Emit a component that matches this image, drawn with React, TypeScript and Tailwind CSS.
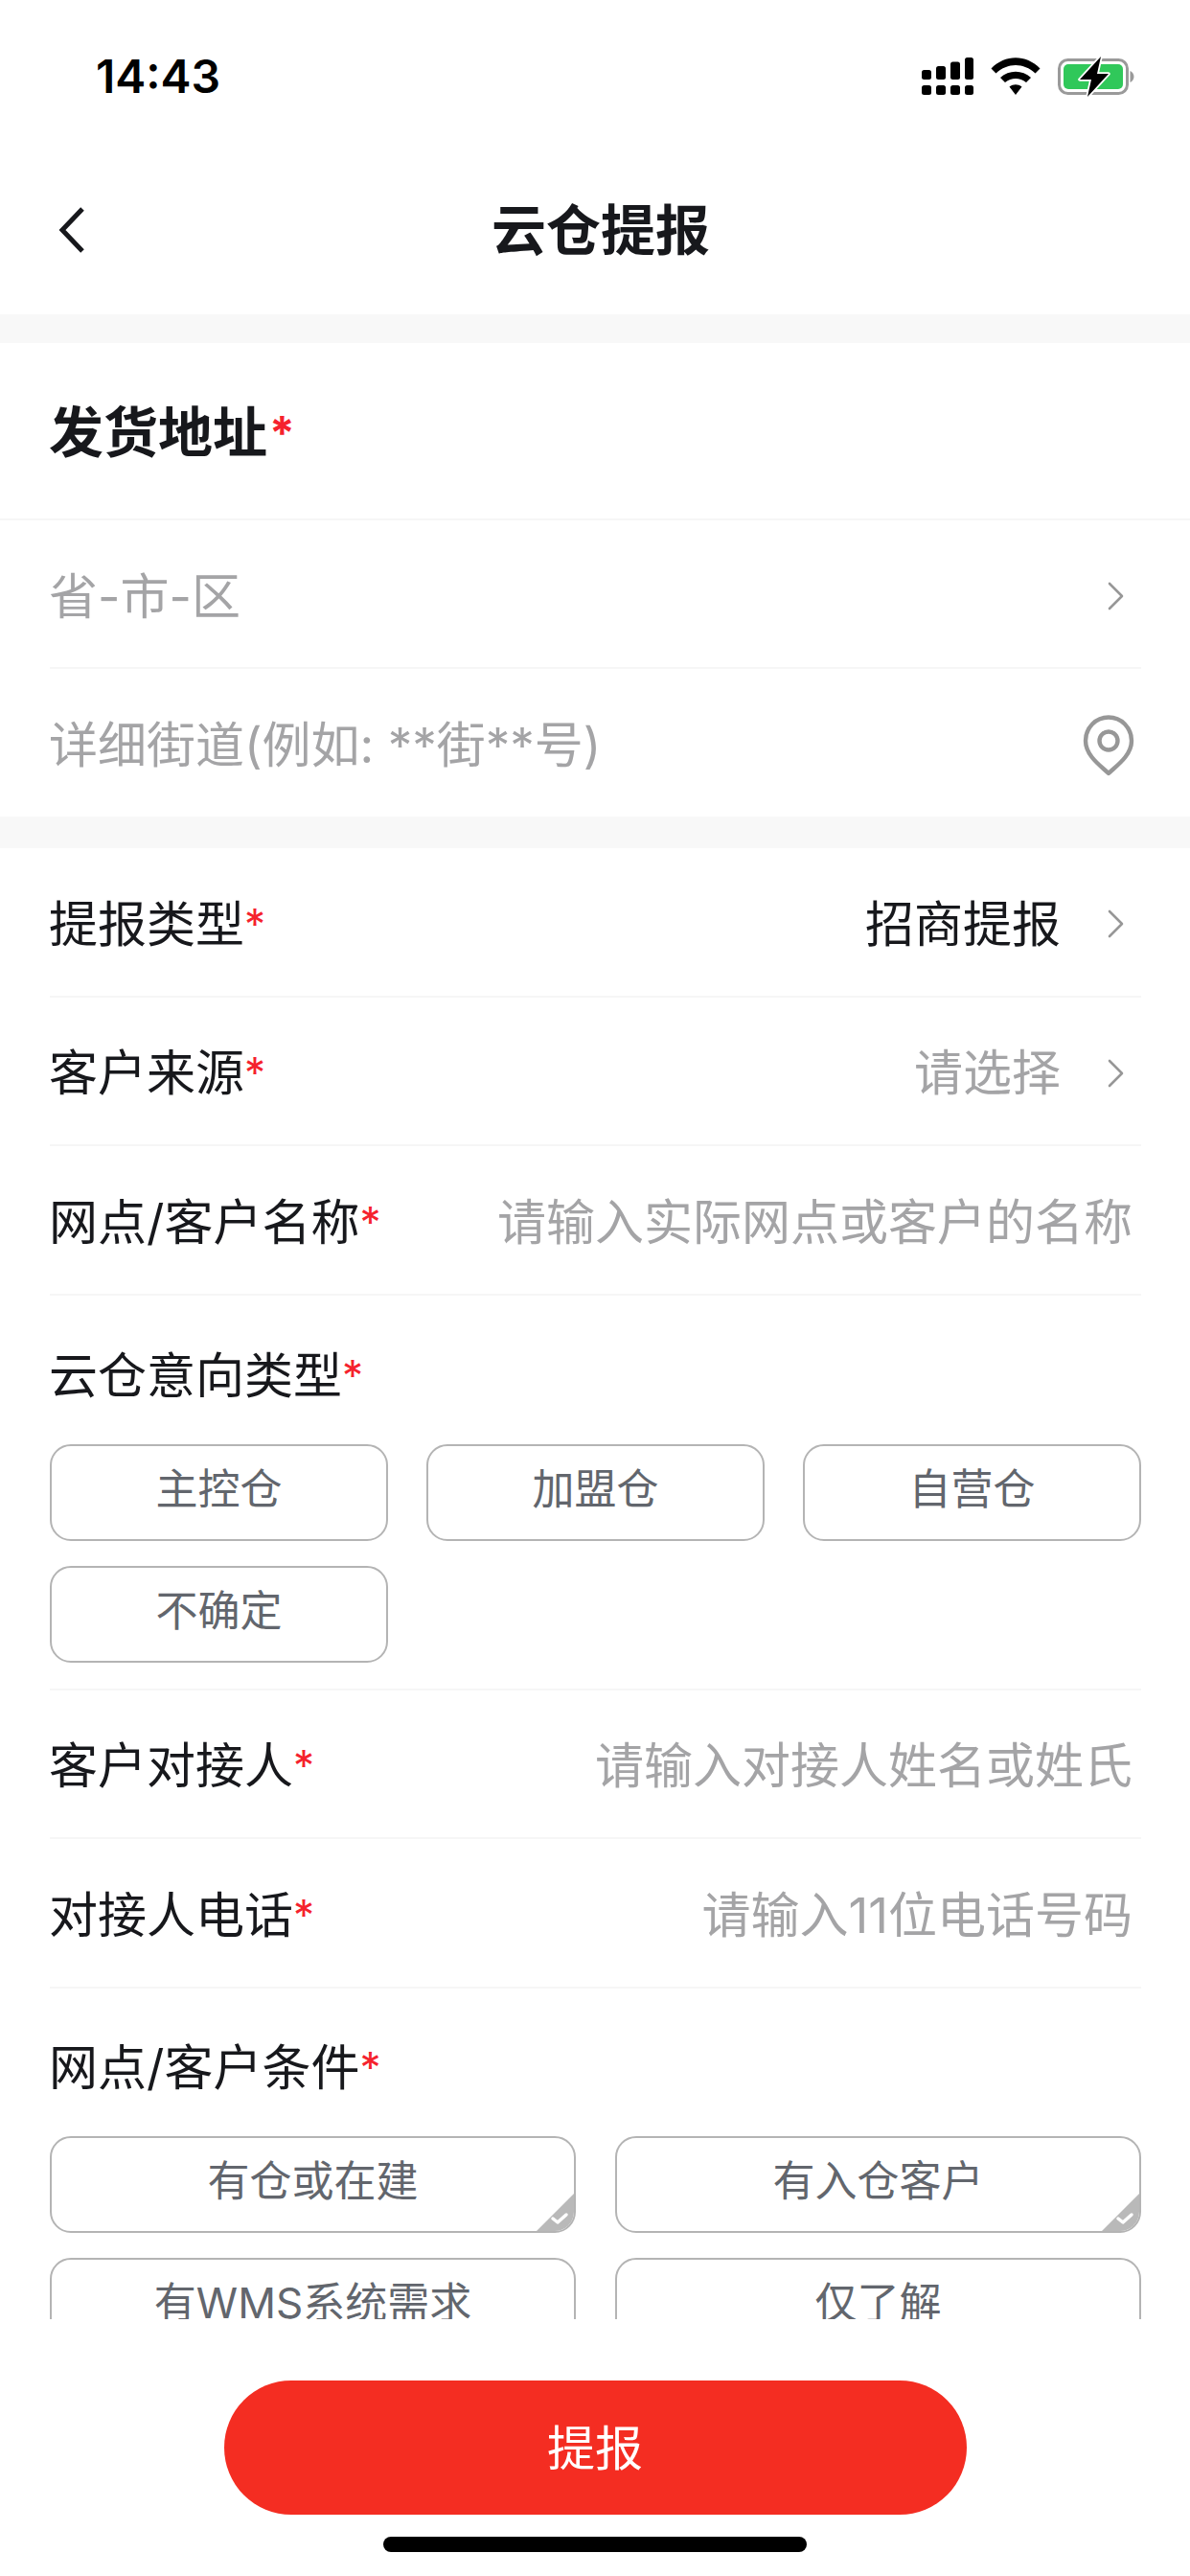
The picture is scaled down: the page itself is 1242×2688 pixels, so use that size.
const FONT = "font-['Inter','Noto_Sans_CJK_SC',sans-serif]";

function Chevron() {
  return (
    <svg width="18" height="30" viewBox="0 0 18 30" fill="none" className="shrink-0">
      <path d="M2 2 L15 15 L2 28" stroke="#979797" strokeWidth="2.6" strokeLinecap="round" strokeLinejoin="round" />
    </svg>
  );
}

function PinIcon() {
  return (
    <svg width="54" height="64" viewBox="0 0 54 64" fill="none" className="shrink-0">
      <path
        d="M27 61 C20 54 3 43 3 27 C3 13 14 2.500 27 2.500 C40 2.500 51 13 51 27 C51 43 34 54 27 61 Z"
        stroke="#979797"
        strokeWidth="4.400"
        strokeLinejoin="round"
      />
      <circle cx="27" cy="27" r="9.500" stroke="#979797" strokeWidth="4.400" />
    </svg>
  );
}

function SignalIcon() {
  return (
    <svg width="54" height="40" viewBox="0 0 54 40" fill="black">
      <rect x="0" y="13" width="10" height="10" rx="2.500" />
      <rect x="15" y="9" width="10" height="14" rx="2.500" />
      <rect x="30" y="4.500" width="10" height="18.500" rx="2.500" />
      <rect x="45" y="0" width="9" height="23" rx="2.500" />
      <rect x="0" y="29" width="10" height="10" rx="2.500" />
      <rect x="15" y="29" width="10" height="10" rx="2.500" />
      <rect x="30" y="29" width="10" height="10" rx="2.500" />
      <rect x="45" y="29" width="9" height="10" rx="2.500" />
    </svg>
  );
}

function WifiIcon() {
  return (
    <svg width="52" height="40" viewBox="0 0 52 40" fill="black">
      <path d="M0.500 11.500 C15 -3.500 37 -3.500 51.500 11.500 L46.500 16.500 C34.500 5 17.500 5 5.500 16.500 Z" />
      <path d="M10 21 C19 12.500 33 12.500 42 21 L37 26 C30.500 20.500 21.500 20.500 15 26 Z" />
      <path d="M19.500 30.500 C23.500 27.500 28.500 27.500 32.500 30.500 L26 39 Z" />
    </svg>
  );
}

function BatteryIcon() {
  return (
    <svg width="80" height="44" viewBox="0 0 80 44" fill="none">
      <rect x="1.500" y="4.500" width="71" height="35" rx="9" stroke="#9a9a9a" strokeWidth="3" />
      <rect x="6" y="9" width="62" height="26" rx="5" fill="#30c85a" />
      <path d="M75.500 16 C78 17 79.500 19.500 79.500 22 C79.500 24.500 78 27 75.500 28 Z" fill="#9a9a9a" />
      <path
        d="M45 1 L23 25 L35 25 L31 43 L53 19 L41 19 Z"
        fill="black"
        stroke="white"
        strokeWidth="3.500"
        strokeLinejoin="round"
        paintOrder="stroke"
      />
    </svg>
  );
}

function Label({ text }: { text: string }) {
  return (
    <span className="-ml-[1px] shrink-0 whitespace-nowrap text-[51px] leading-none text-[#17181c]">
      {text}
      <span className="relative -top-[3px] text-[44px] text-[#f5222d]">*</span>
    </span>
  );
}

function FormRow({
  label,
  value,
  placeholder,
  arrow,
}: {
  label: string;
  value?: string;
  placeholder?: string;
  arrow?: boolean;
}) {
  return (
    <div className="flex h-[155.5px] items-center justify-between border-b-2 border-[#f6f6f6] pt-[5px]">
      <Label text={label} />
      <div className="flex items-center">
        {value && <span className="text-[51px] leading-none text-[#17181c]">{value}</span>}
        {placeholder && (
          <span className={`text-[51px] leading-none text-[#a4a4a6] ${arrow ? "" : "mr-[9px]"}`}>{placeholder}</span>
        )}
        {arrow && (
          <span className="ml-[49px] mr-[17px] flex">
            <Chevron />
          </span>
        )}
      </div>
    </div>
  );
}

function Chip({ text, checked }: { text: string; checked?: boolean }) {
  return (
    <div className="relative flex h-[101px] items-center justify-center overflow-hidden rounded-[22px] border-2 border-[#b4b4b4] bg-white pb-[6px] text-[44px] leading-none text-[#62666d]">
      {text}
      {checked && (
        <svg width="39" height="39" viewBox="0 0 39 39" className="absolute right-0 bottom-0">
          <path d="M39 0 L39 39 L0 39 Z" fill="#b9b9b9" />
          <path d="M17 26 L22 30 L31 22" fill="none" stroke="white" strokeWidth="3.500" strokeLinecap="round" strokeLinejoin="round" />
        </svg>
      )}
    </div>
  );
}

const intentChips = ["主控仓", "加盟仓", "自营仓", "不确定"];

const conditionChips = [
  { text: "有仓或在建", checked: true },
  { text: "有入仓客户", checked: true },
  { text: "有WMS系统需求" },
  { text: "仅了解" },
];

export default function App() {
  return (
    <div className={`flex h-[2688px] w-[1242px] flex-col overflow-hidden bg-white ${FONT}`}>
      {/* Status bar */}
      <div className="flex h-[156px] items-center justify-between pt-[3px] pl-[100px] pr-[58px]">
        <span className="text-[48px] leading-none font-semibold text-black">14:43</span>
        <div className="flex items-center gap-[18px]">
          <SignalIcon />
          <WifiIcon />
          <BatteryIcon />
        </div>
      </div>

      {/* Nav bar */}
      <div className="relative flex h-[172px] items-center justify-center pb-[4px] pl-[12px]">
        <svg width="30" height="50" viewBox="0 0 30 50" fill="none" className="absolute top-[59px] left-[60px]">
          <path d="M26 3 L5 25 L26 47" stroke="#17181c" strokeWidth="5" />
        </svg>
        <span className="text-[57px] leading-none font-bold text-[#17181c]">云仓提报</span>
      </div>

      {/* Form */}
      <div className="flex-1 overflow-hidden">
        <div className="h-[30px] bg-[#f8f8f8]" />

        <div className="flex h-[185px] items-center border-b-2 border-[#f6f6f6] pr-[52px] pl-[51px] pt-[4px]">
          <span className="text-[57px] leading-none font-bold text-[#17181c]">
            发货地址
            <span className="relative -top-[3px] ml-[2px] text-[48px] text-[#f5222d]">*</span>
          </span>
        </div>

        <div className="pl-[52px] pr-[51px]">
          <div className="flex h-[155px] items-center justify-between border-b-2 border-[#f6f6f6] pt-[5px]">
            <span className="-ml-[1px] text-[51px] leading-none text-[#a4a4a6]">省-市-区</span>
            <span className="mr-[17px] flex">
              <Chevron />
            </span>
          </div>
          <div className="flex h-[154px] items-center justify-between pt-[5px]">
            <span className="-ml-[1px] text-[51px] leading-none text-[#a4a4a6]">详细街道(例如: **街**号)</span>
            <span className="mr-[7px] mt-[1px] flex">
              <PinIcon />
            </span>
          </div>
        </div>

        <div className="h-[33px] bg-[#f8f8f8]" />

        <div className="pl-[52px] pr-[51px]">
          <FormRow label="提报类型" value="招商提报" arrow />
          <FormRow label="客户来源" placeholder="请选择" arrow />
          <FormRow label="网点/客户名称" placeholder="请输入实际网点或客户的名称" />

          <div className="border-b-2 border-[#f6f6f6] pt-[58px] pb-[27px]">
            <Label text="云仓意向类型" />
            <div className="mt-[46px] grid grid-cols-3 gap-x-[40px] gap-y-[26px]">
              {intentChips.map((c) => (
                <Chip key={c} text={c} />
              ))}
            </div>
          </div>

          <FormRow label="客户对接人" placeholder="请输入对接人姓名或姓氏" />
          <FormRow label="对接人电话" placeholder="请输入11位电话号码" />

          <div className="pt-[57px]">
            <Label text="网点/客户条件" />
            <div className="mt-[46px] grid grid-cols-2 gap-x-[41px] gap-y-[26px]">
              {conditionChips.map((c) => (
                <Chip key={c.text} text={c.text} checked={c.checked} />
              ))}
            </div>
          </div>
        </div>
      </div>

      {/* Bottom action */}
      <div className="flex h-[268px] shrink-0 flex-col items-center pt-[64px]">
        <button className="flex h-[140px] w-[775px] items-center justify-center rounded-full bg-[#f42d22] pt-[2px] text-[50px] leading-none text-white">
          提报
        </button>
        <div className="mt-[23px] h-[16px] w-[442px] rounded-full bg-black" />
      </div>
    </div>
  );
}
